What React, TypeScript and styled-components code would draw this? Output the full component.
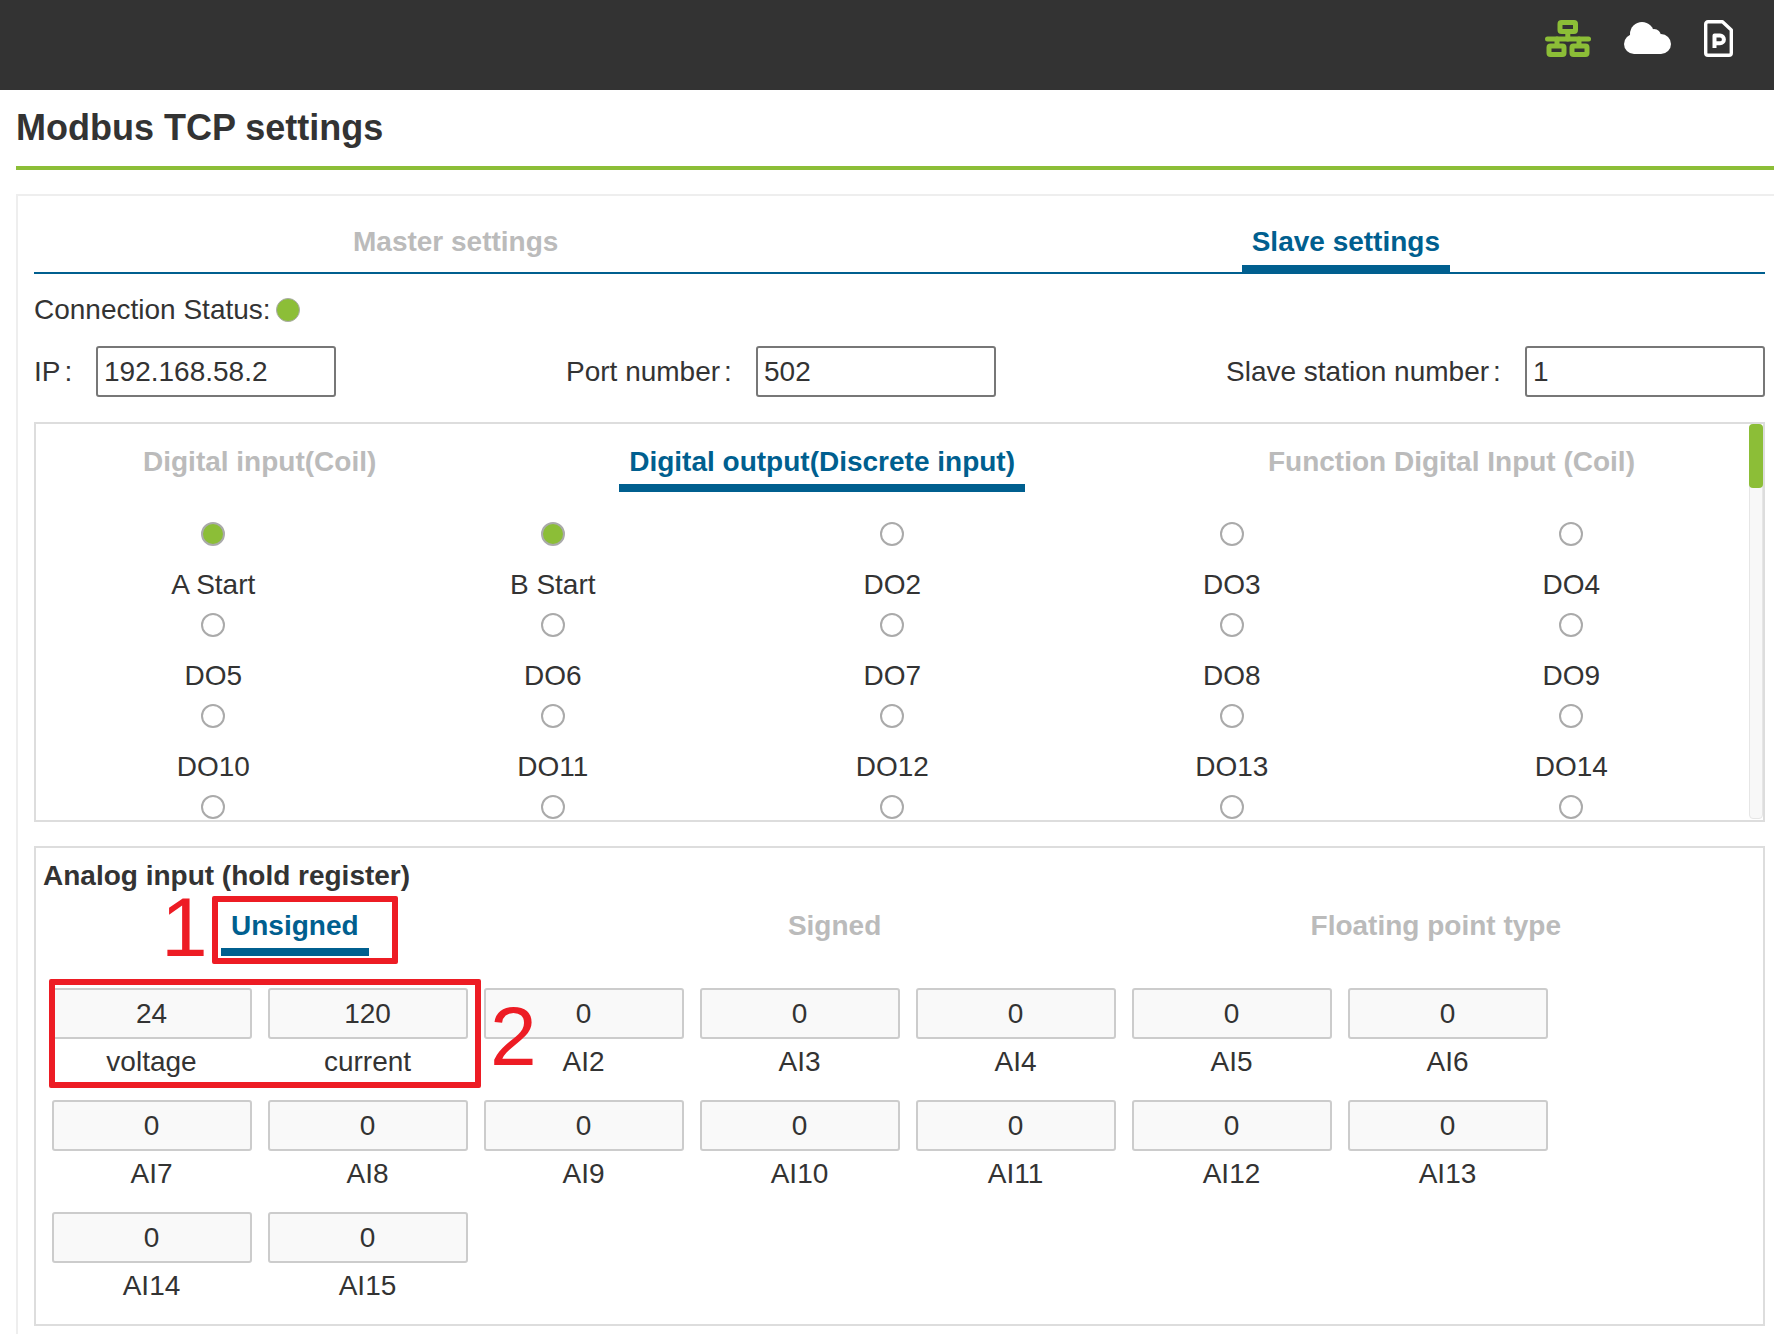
import React from 'react'
import styled, { createGlobalStyle } from 'styled-components'

const GlobalStyle = createGlobalStyle`
  html, body {
    margin: 0;
    padding: 0;
    background: #fff;
    overflow: hidden;
  }
  * {
    box-sizing: border-box;
  }
  body {
    font-family: "Liberation Sans", Arial, sans-serif;
    font-size: 28px;
    color: #333;
  }
`

const GREEN = '#8cbe37'
const BLUE = '#005f8f'
const RED = '#ed1c24'

const Page = styled.div`
  width: 1774px;
  height: 1334px;
  overflow: hidden;
`

const TopBar = styled.header`
  height: 90px;
  background: #333;
  display: flex;
  justify-content: flex-end;
  align-items: flex-start;
  padding: 20px 41px 0 0;
`

const IconRow = styled.div`
  display: flex;
  align-items: flex-start;
  gap: 33px;
`

const CloudIcon = styled.svg`
  margin-top: 2px;
`

const Title = styled.h1`
  margin: 0 0 24px 16px;
  height: 80px;
  border-bottom: 4px solid ${GREEN};
  font-size: 36px;
  line-height: 76px;
  font-weight: bold;
  color: #333;
`

const Panel = styled.section`
  margin-left: 16px;
  min-height: 1200px;
  border: 2px solid #eee;
  border-right: none;
  padding: 0 9px 0 16px;
`

const MainTabs = styled.div`
  height: 78px;
  border-bottom: 2px solid ${BLUE};
  display: flex;
  justify-content: space-between;
  align-items: flex-end;
  padding: 0 315px 0 309px;
`

const Tab = styled.div<{ $active?: boolean }>`
  padding: 0 10px;
  font-size: 28px;
  font-weight: bold;
  white-space: nowrap;
  color: ${(p) => (p.$active ? BLUE : '#bbb')};
  border-bottom: 8px solid ${(p) => (p.$active ? BLUE : 'transparent')};
`

const MainTab = styled(Tab)`
  height: 70px;
  line-height: 78px;
  margin-bottom: -1px;
`

const StatusRow = styled.div`
  display: flex;
  align-items: center;
  height: 72px;
  gap: 5px;
  line-height: 72px;
`

const StatusDot = styled.span`
  width: 24px;
  height: 24px;
  border-radius: 50%;
  background: ${GREEN};
  border: 1px solid #aaa;
`

const FieldRow = styled.div`
  display: flex;
  justify-content: space-between;
  height: 51px;
  margin-bottom: 25px;
`

const Field = styled.label`
  display: flex;
  align-items: flex-start;
`

const FieldLabel = styled.span<{ $width: number }>`
  width: ${(p) => p.$width}px;
  white-space: nowrap;
  line-height: 51px;
`

const FieldColon = styled.span`
  margin-left: 4px;
`

const FieldBox = styled.div`
  width: 240px;
  height: 51px;
  border: 2px solid #777;
  border-radius: 3px;
  padding-left: 6px;
  line-height: 47px;
`

const DigitalPanel = styled.div`
  position: relative;
  height: 400px;
  border: 2px solid #ddd;
  overflow: hidden;
  margin-bottom: 24px;
`

const DigitalTabs = styled.div`
  display: flex;
  justify-content: space-between;
  padding: 0 118px 0 97px;
  height: 68px;
  margin-bottom: 30px;
`

const DigitalTab = styled(Tab)`
  height: 68px;
  line-height: 76px;
`

const DigitalGrid = styled.div`
  display: grid;
  grid-template-columns: repeat(5, 339.5px);
  grid-auto-rows: 91px;
  margin-left: 7.5px;
`

const DigitalItem = styled.div`
  display: flex;
  flex-direction: column;
  align-items: center;
`

const Radio = styled.span<{ $on?: boolean }>`
  width: 24px;
  height: 24px;
  flex: none;
  border-radius: 50%;
  border: 2px solid #aaa;
  background: ${(p) => (p.$on ? GREEN : '#fff')};
`

const DigitalLabel = styled.div`
  margin-top: 21px;
  line-height: 36px;
`

const ScrollTrack = styled.div`
  position: absolute;
  top: 0;
  right: 0;
  bottom: 1px;
  width: 14px;
  background: #f8f8f8;
  border: 1px solid #e6e6e6;
  border-radius: 4px;
`

const ScrollThumb = styled.div`
  position: absolute;
  top: -1px;
  left: -1px;
  right: -1px;
  height: 64px;
  background: ${GREEN};
  border-radius: 4px;
`

const AnalogPanel = styled.div`
  position: relative;
  height: 480px;
  border: 2px solid #ddd;
  padding: 0 0 0 7px;
`

const AnalogTitle = styled.div`
  font-weight: bold;
  line-height: 36px;
  padding-top: 10px;
  height: 46px;
`

const AnalogTabs = styled.div`
  display: flex;
  justify-content: space-between;
  padding: 0 192px 0 178px;
  height: 62px;
  margin-bottom: 32px;
`

const AnalogTab = styled(Tab)`
  height: 62px;
  line-height: 64px;
`

const CellGrid = styled.div`
  display: grid;
  grid-template-columns: repeat(7, 216px);
  grid-auto-rows: 112px;
  margin-left: 9px;
`

const Cell = styled.div`
  width: 200px;
  display: flex;
  flex-direction: column;
  align-items: center;
`

const CellValue = styled.div`
  width: 200px;
  height: 51px;
  border: 2px solid #ccc;
  border-radius: 3px;
  background: #f9f9f9;
  text-align: center;
  padding-right: 1px;
  line-height: 47px;
`

const CellLabel = styled.div`
  margin: 5px 1px 0 0;
  line-height: 36px;
`

const RedFrame = styled.div<{ $left: number; $top: number; $w: number; $h: number }>`
  position: absolute;
  left: ${(p) => p.$left}px;
  top: ${(p) => p.$top}px;
  width: ${(p) => p.$w}px;
  height: ${(p) => p.$h}px;
  border: 6px solid ${RED};
  border-radius: 2px;
`

const RedNumber = styled.div<{ $left: number; $top: number }>`
  position: absolute;
  left: ${(p) => p.$left}px;
  top: ${(p) => p.$top}px;
  font-size: 84px;
  line-height: 60px;
  color: ${RED};
`

const digitalLabels = [
  'A Start', 'B Start', 'DO2', 'DO3', 'DO4',
  'DO5', 'DO6', 'DO7', 'DO8', 'DO9',
  'DO10', 'DO11', 'DO12', 'DO13', 'DO14',
  '', '', '', '', '',
]

const analogCells = [
  ['24', 'voltage'], ['120', 'current'], ['0', 'AI2'], ['0', 'AI3'], ['0', 'AI4'], ['0', 'AI5'], ['0', 'AI6'],
  ['0', 'AI7'], ['0', 'AI8'], ['0', 'AI9'], ['0', 'AI10'], ['0', 'AI11'], ['0', 'AI12'], ['0', 'AI13'],
  ['0', 'AI14'], ['0', 'AI15'],
]

function NetworkIcon() {
  return (
    <svg width="46" height="37" viewBox="0 0 46 37" fill="none" stroke={GREEN} strokeWidth="5" strokeLinejoin="round" strokeLinecap="round">
      <rect x="15" y="2.5" width="15.5" height="9" rx="1.5" />
      <path d="M22.8 12v7" />
      <path d="M2.5 19h41" />
      <path d="M12 19v6M34 19v6" />
      <rect x="4" y="26" width="15" height="8.5" rx="1.5" />
      <rect x="27" y="26" width="15" height="8.5" rx="1.5" />
    </svg>
  )
}

function Cloud() {
  return (
    <CloudIcon width="47" height="32" viewBox="0 0 47 32" fill="#fff">
      <circle cx="10" cy="22" r="10" />
      <circle cx="18" cy="12" r="12" />
      <circle cx="30" cy="14" r="7" />
      <circle cx="37" cy="22" r="10" />
      <rect x="10" y="14" width="27" height="18" />
    </CloudIcon>
  )
}

function ParamFileIcon() {
  return (
    <svg width="29" height="37" viewBox="0 0 29 37" fill="none" stroke="#fff" strokeLinejoin="round">
      <path d="M4 1.7h14.5L27.3 10v23A2.3 2.3 0 0 1 25 35.3H4A2.3 2.3 0 0 1 1.7 33V4A2.3 2.3 0 0 1 4 1.7z" strokeWidth="3.4" />
      <path d="M10.5 28V15.5h5.5a3.8 3.8 0 0 1 0 7.8h-5.5" strokeWidth="4" />
    </svg>
  )
}

export default function App() {
  return (
    <Page>
      <GlobalStyle />
      <TopBar>
        <IconRow>
          <NetworkIcon />
          <Cloud />
          <ParamFileIcon />
        </IconRow>
      </TopBar>
      <Title>Modbus TCP settings</Title>
      <Panel>
        <MainTabs>
          <MainTab>Master settings</MainTab>
          <MainTab $active>Slave settings</MainTab>
        </MainTabs>
        <StatusRow>
          Connection Status:
          <StatusDot />
        </StatusRow>
        <FieldRow>
          <Field>
            <FieldLabel $width={62}>IP<FieldColon>:</FieldColon></FieldLabel>
            <FieldBox>192.168.58.2</FieldBox>
          </Field>
          <Field>
            <FieldLabel $width={190}>Port number<FieldColon>:</FieldColon></FieldLabel>
            <FieldBox>502</FieldBox>
          </Field>
          <Field>
            <FieldLabel $width={299}>Slave station number<FieldColon>:</FieldColon></FieldLabel>
            <FieldBox>1</FieldBox>
          </Field>
        </FieldRow>
        <DigitalPanel>
          <DigitalTabs>
            <DigitalTab>Digital input(Coil)</DigitalTab>
            <DigitalTab $active>Digital output(Discrete input)</DigitalTab>
            <DigitalTab>Function Digital Input (Coil)</DigitalTab>
          </DigitalTabs>
          <DigitalGrid>
            {digitalLabels.map((label, i) => (
              <DigitalItem key={i}>
                <Radio $on={i < 2} />
                <DigitalLabel>{label}</DigitalLabel>
              </DigitalItem>
            ))}
          </DigitalGrid>
          <ScrollTrack>
            <ScrollThumb />
          </ScrollTrack>
        </DigitalPanel>
        <AnalogPanel>
          <AnalogTitle>Analog input (hold register)</AnalogTitle>
          <AnalogTabs>
            <AnalogTab $active>Unsigned</AnalogTab>
            <AnalogTab>Signed</AnalogTab>
            <AnalogTab>Floating point type</AnalogTab>
          </AnalogTabs>
          <CellGrid>
            {analogCells.map(([value, label], i) => (
              <Cell key={i}>
                <CellValue>{value}</CellValue>
                <CellLabel>{label}</CellLabel>
              </Cell>
            ))}
          </CellGrid>
          <RedFrame $left={176} $top={48} $w={186} $h={68} />
          <RedNumber $left={125} $top={49}>1</RedNumber>
          <RedFrame $left={13} $top={131} $w={432} $h={109} />
          <RedNumber $left={454} $top={158}>2</RedNumber>
        </AnalogPanel>
      </Panel>
    </Page>
  )
}
